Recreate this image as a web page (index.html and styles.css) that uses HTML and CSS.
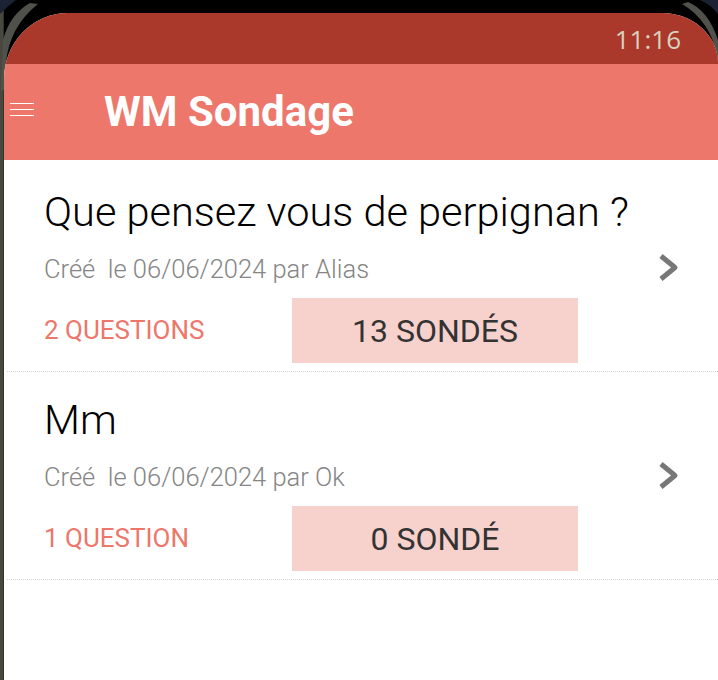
FILE: index.html
```html
<!DOCTYPE html>
<html lang="fr">
<head>
<meta charset="utf-8">
<title>WM Sondage</title>
<link rel="stylesheet" href="styles.css">
</head>
<body>
<svg class="bezel bezel-left" width="70" height="90" viewBox="0 0 70 90" aria-hidden="true">
  <path d="M0 0 H16 Q8 6 0 14 Z" fill="#1b2233"/>
  <path d="M30 3 Q10 14 3 40 L1 90 L4 90 L6 62 Q10 26 38 4 Z" fill="#50514a"/>
</svg>
<svg class="bezel bezel-right" width="40" height="70" viewBox="0 0 40 70" aria-hidden="true">
  <path d="M22 0 H40 V14 Q32 4 22 0 Z" fill="#1b2233"/>
  <path d="M10 2 Q30 10 40 40 L40 58 Q32 20 4 4 Z" fill="#50514a"/>
</svg>
<div class="screen">
  <div class="statusbar"><span class="time">11:16</span></div>
  <header class="toolbar">
    <span class="menu"><i></i><i></i><i></i></span>
    <h1 class="app-title">WM Sondage</h1>
  </header>
  <main class="list">
    <article class="poll">
      <h2 class="poll-title">Que pensez vous de perpignan ?</h2>
      <div class="meta-row">
        <span class="meta">Créé&nbsp; le 06/06/2024 par Alias</span>
        <svg class="chev" width="22" height="31" viewBox="0 0 22 31" aria-hidden="true"><path d="M4 4 L18 15.5 L4 27" fill="none" stroke="#777" stroke-width="5" stroke-linejoin="round"/></svg>
      </div>
      <div class="stats">
        <span class="questions">2 QUESTIONS</span>
        <span class="respondents">13 SONDÉS</span>
      </div>
    </article>
    <article class="poll">
      <h2 class="poll-title">Mm</h2>
      <div class="meta-row">
        <span class="meta">Créé&nbsp; le 06/06/2024 par Ok</span>
        <svg class="chev" width="22" height="31" viewBox="0 0 22 31" aria-hidden="true"><path d="M4 4 L18 15.5 L4 27" fill="none" stroke="#777" stroke-width="5" stroke-linejoin="round"/></svg>
      </div>
      <div class="stats">
        <span class="questions">1 QUESTION</span>
        <span class="respondents">0 SONDÉ</span>
      </div>
    </article>
  </main>
</div>
</body>
</html>
```

FILE: styles.css
```css
html, body {
  margin: 0;
  padding: 0;
  height: 100%;
}

body {
  position: relative;
  background: linear-gradient(to right, #48483f 0, #48483f 3px, #34342e 3px, #34342e 4px, #000 4px);
  font-family: Roboto, "Noto Sans", sans-serif;
  overflow: hidden;
}

.bezel {
  position: absolute;
  top: 0;
  z-index: 0;
}
.bezel-left { left: 0; }
.bezel-right { right: 0; }

.screen {
  position: relative;
  z-index: 1;
  margin: 13px 0 0 4px;
  height: 667px;
  background: #fff;
  border-top-left-radius: 64px 66px;
  border-top-right-radius: 56px 50px;
  overflow: hidden;
}

.statusbar {
  height: 51px;
  background: #ab392b;
  display: flex;
  justify-content: flex-end;
  align-items: flex-start;
  padding-right: 37px;
}

.time {
  font-family: "Open Sans", sans-serif;
  font-size: 26px;
  line-height: 26px;
  margin-top: 13px;
  color: #d8d2bf;
}

.toolbar {
  height: 96px;
  background: #ec776a;
  display: flex;
  align-items: center;
  padding-left: 6px;
}

.menu {
  display: flex;
  flex-direction: column;
  gap: 5px;
  width: 24px;
  margin-top: -6px;
}
.menu i {
  display: block;
  height: 1px;
  background: #fff;
}

.app-title {
  margin: 0 0 0 70px;
  color: #fff;
  font-weight: 700;
  font-size: 42px;
  line-height: 44px;
}

.list {
  padding-top: 4px;
  padding-left: 3px;
}

.poll {
  padding: 24px 39px 8px 37px;
  border-bottom: 1px dotted #d4d4d4;
}

.poll-title {
  margin: 0;
  font-weight: 300;
  font-size: 41.5px;
  line-height: 48px;
  color: #000;
}

.meta-row {
  margin-top: 18px;
  display: flex;
  align-items: center;
  justify-content: space-between;
  height: 30px;
}

.meta {
  font-weight: 300;
  font-size: 25.5px;
  line-height: 30px;
  color: #858585;
}

.chev {
  display: block;
  margin-top: -4px;
}

.stats {
  margin-top: 14px;
  display: grid;
  grid-template-columns: 248px 286px;
  align-items: center;
}

.questions {
  font-size: 26px;
  color: #ec776a;
  margin-top: -2px;
}

.respondents {
  height: 65px;
  background: #f7d2cd;
  display: flex;
  align-items: center;
  justify-content: center;
  font-size: 32px;
  color: #333;
}
```
